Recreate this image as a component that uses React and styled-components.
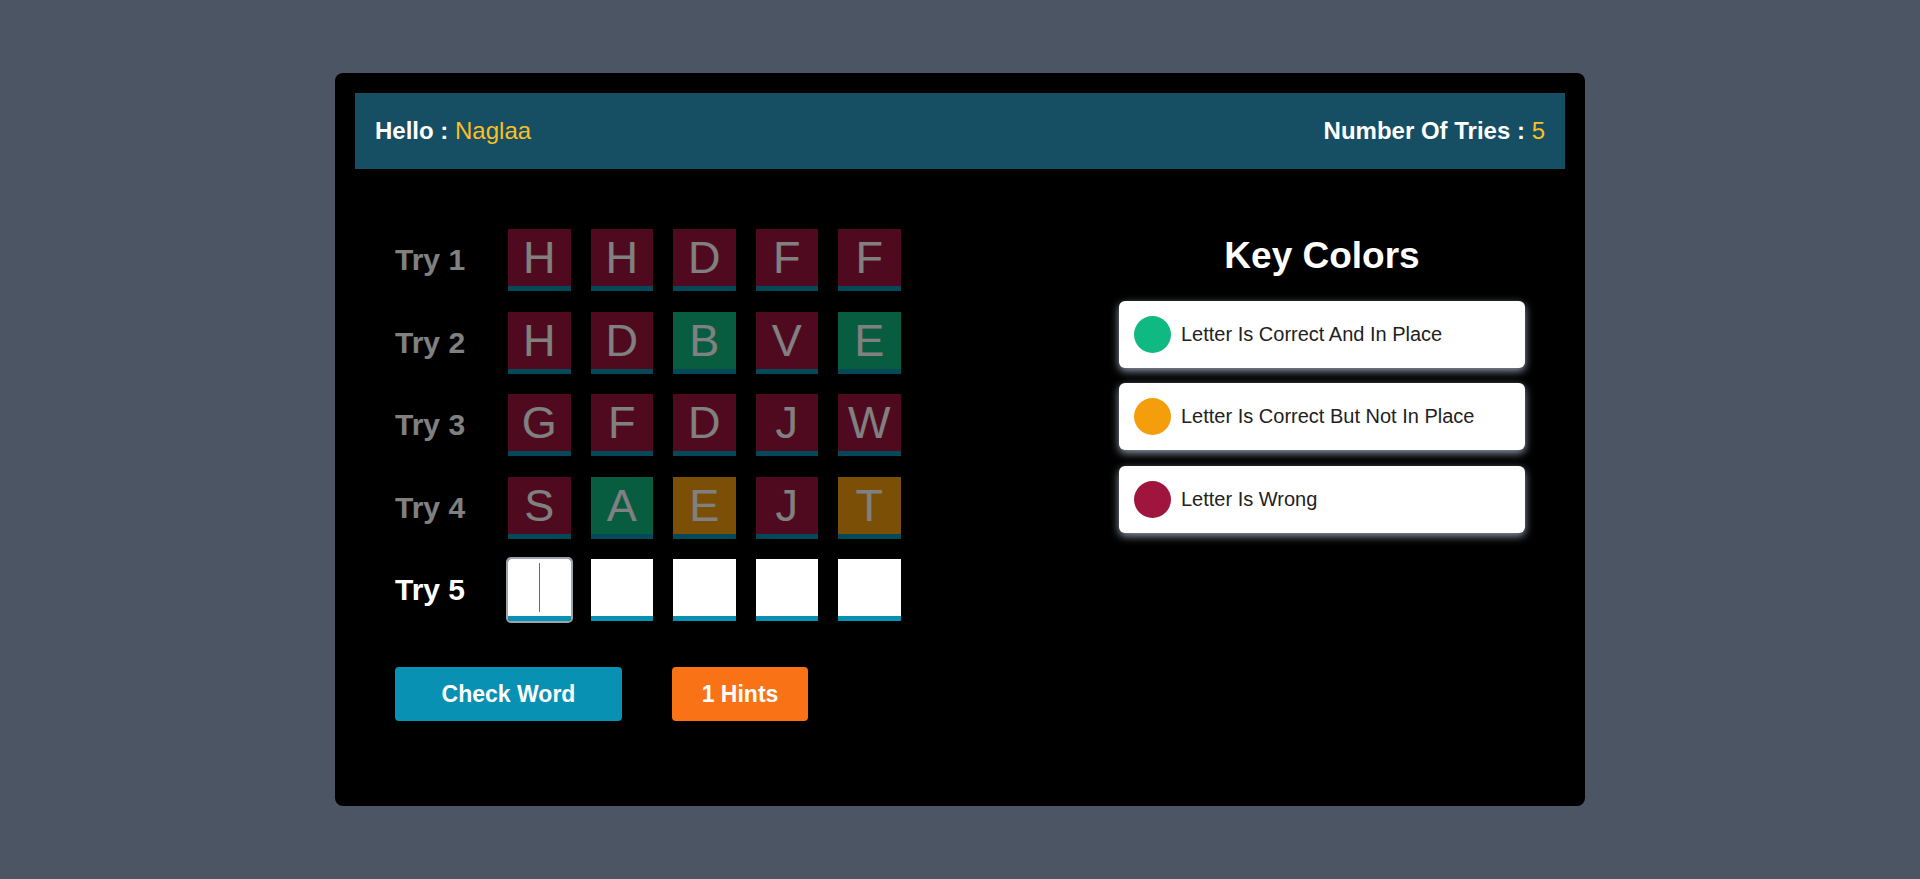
import React from 'react'
import styled, { createGlobalStyle } from 'styled-components'

const COLORS = {
  correct: '#10b981',
  misplaced: '#f59e0b',
  wrong: '#a0153e',
  empty: '#ffffff',
}

const TRIES = [
  [['H', 'wrong'], ['H', 'wrong'], ['D', 'wrong'], ['F', 'wrong'], ['F', 'wrong']],
  [['H', 'wrong'], ['D', 'wrong'], ['B', 'correct'], ['V', 'wrong'], ['E', 'correct']],
  [['G', 'wrong'], ['F', 'wrong'], ['D', 'wrong'], ['J', 'wrong'], ['W', 'wrong']],
  [['S', 'wrong'], ['A', 'correct'], ['E', 'misplaced'], ['J', 'wrong'], ['T', 'misplaced']],
]

const LEGEND = [
  ['correct', 'Letter Is Correct And In Place'],
  ['misplaced', 'Letter Is Correct But Not In Place'],
  ['wrong', 'Letter Is Wrong'],
]

const GlobalStyle = createGlobalStyle`
  * { box-sizing: border-box; }
  body {
    margin: 0;
    background: #4b5563;
    font-family: "Liberation Sans", Arial, sans-serif;
  }
`

const Page = styled.div`
  min-height: 100vh;
  display: flex;
  align-items: center;
  justify-content: center;
`

const Card = styled.div`
  width: 1250px;
  background: #000;
  border-radius: 8px;
  padding: 20px;
`

const Header = styled.div`
  height: 76px;
  background: #164e63;
  display: flex;
  align-items: center;
  justify-content: space-between;
  padding: 0 20px;
  color: #fff;
  font-size: 24px;
  font-weight: 700;
`

const Accent = styled.span`
  color: #fbbf24;
  font-weight: 400;
`

const Main = styled.div`
  display: flex;
  justify-content: space-between;
  padding: 60px 40px 65px;
`

const Board = styled.div`
  display: flex;
  flex-direction: column;
  gap: 20.5px;
`

const Row = styled.div`
  display: flex;
  align-items: center;
  opacity: ${p => (p.$disabled ? 0.5 : 1)};
`

const Label = styled.div`
  width: 113px;
  font-size: 30px;
  font-weight: 700;
  color: #fff;
`

const Tiles = styled.div`
  display: flex;
  gap: 20px;
`

const Tile = styled.div`
  position: relative;
  width: 62.5px;
  height: 62px;
  background: ${p => COLORS[p.$state]};
  border-bottom: 5px solid #0891b2;
  display: flex;
  align-items: center;
  justify-content: center;
  font-size: 45px;
  line-height: 1;
  color: #fff;
  outline: ${p => (p.$focused ? '2px solid #9ca3af' : 'none')};
  border-radius: ${p => (p.$focused ? '3px' : '0')};
`

const Caret = styled.span`
  width: 1px;
  height: 49px;
  background: #0891b2;
`

const Actions = styled.div`
  display: flex;
  gap: 50px;
  margin-top: 46px;
`

const Button = styled.button`
  width: ${p => p.$width}px;
  height: 54px;
  border: none;
  border-radius: 4px;
  background: ${p => p.$bg};
  color: #fff;
  font-family: inherit;
  font-size: 23px;
  font-weight: 700;
  cursor: pointer;
`

const Side = styled.div`
  width: 406px;
  padding-top: 6px;
`

const Title = styled.h2`
  margin: 0 0 23px;
  text-align: center;
  color: #fff;
  font-size: 37px;
  line-height: 1.15;
  font-weight: 700;
`

const Legend = styled.div`
  display: flex;
  flex-direction: column;
  gap: 15.5px;
`

const LegendItem = styled.div`
  display: flex;
  align-items: center;
  background: #fff;
  border-radius: 6px;
  padding: 15px;
  box-shadow: 0 3px 8px rgba(170, 182, 204, 0.85);
`

const Dot = styled.span`
  width: 37px;
  height: 37px;
  border-radius: 50%;
  background: ${p => COLORS[p.$state]};
`

const LegendText = styled.span`
  margin-left: 10px;
  font-size: 20px;
  color: #222;
`

export default function App() {
  return (
    <Page>
      <GlobalStyle />
      <Card>
        <Header>
          <div>Hello : <Accent>Naglaa</Accent></div>
          <div>Number Of Tries : <Accent>5</Accent></div>
        </Header>
        <Main>
          <div>
            <Board>
              {TRIES.map((letters, i) => (
                <Row key={i} $disabled>
                  <Label>Try {i + 1}</Label>
                  <Tiles>
                    {letters.map(([ch, state], j) => (
                      <Tile key={j} $state={state}>{ch}</Tile>
                    ))}
                  </Tiles>
                </Row>
              ))}
              <Row>
                <Label>Try 5</Label>
                <Tiles>
                  {[0, 1, 2, 3, 4].map(j => (
                    <Tile key={j} $state="empty" $focused={j === 0}>
                      {j === 0 && <Caret />}
                    </Tile>
                  ))}
                </Tiles>
              </Row>
            </Board>
            <Actions>
              <Button $width={227} $bg="#0891b2">Check Word</Button>
              <Button $width={136} $bg="#f97316">1 Hints</Button>
            </Actions>
          </div>
          <Side>
            <Title>Key Colors</Title>
            <Legend>
              {LEGEND.map(([state, text]) => (
                <LegendItem key={state}>
                  <Dot $state={state} />
                  <LegendText>{text}</LegendText>
                </LegendItem>
              ))}
            </Legend>
          </Side>
        </Main>
      </Card>
    </Page>
  )
}
